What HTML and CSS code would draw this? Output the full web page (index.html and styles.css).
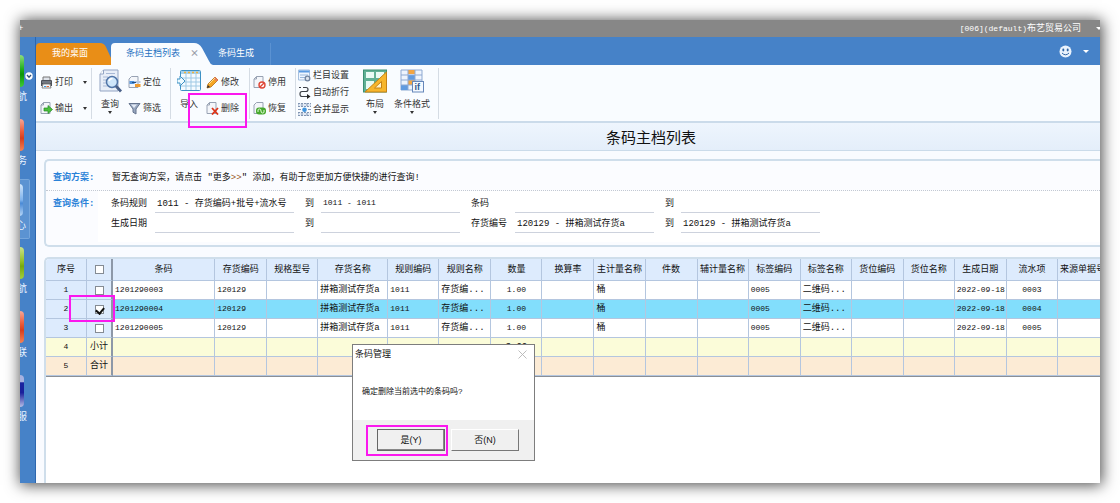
FILE: index.html
```html
<!DOCTYPE html>
<html lang="zh-CN">
<head>
  <meta charset="UTF-8" />
  <meta name="viewport" content="width=device-width, initial-scale=1.0" />
  <title>条码主档列表</title>
  <link rel="stylesheet" href="styles.css">
</head>
<body>
  <div class="window">
    <header class="titlebar">
      <span class="plus">+</span>
      <span class="company"><span class="num">[006](default)</span>布艺贸易公司</span>
      <i class="caret"></i>
    </header>

    <div class="shell">
      <nav class="sidebar">
        <a class="side-item green" href="#"><i></i><span>航</span></a>
        <a class="side-item red" href="#"><i></i><span>务</span></a>
        <a class="side-item blue active" href="#"><i></i><span>心</span></a>
        <a class="side-item lime" href="#"><i></i><span>航</span></a>
        <a class="side-item red" href="#"><i></i><span>联</span></a>
        <a class="side-item navy" href="#"><i></i><span>服</span></a>
        <button class="collapse" aria-label="收起">
          <svg width="8" height="8" viewBox="0 0 8 8"><circle cx="4" cy="4" r="3.7" fill="#fff"/><path d="M2 3l2 2.2L6 3" fill="none" stroke="#2b4f7d" stroke-width="1.3"/></svg>
        </button>
      </nav>

      <main class="main">
        <div class="tabs">
          <a class="tab home" href="#">我的桌面</a>
          <a class="tab current" href="#">条码主档列表 <b class="close">×</b></a>
          <a class="tab plain" href="#">条码生成</a>
          <div class="user">
            <svg width="13" height="13" viewBox="0 0 13 13"><circle cx="6.500" cy="6.500" r="6" fill="#e9f2fc"/><ellipse cx="4.300" cy="5" rx="1" ry="1.400" fill="#2f65a5"/><ellipse cx="8.700" cy="5" rx="1" ry="1.400" fill="#2f65a5"/><path d="M3 8q3.500 3.600 7 0" fill="none" stroke="#2f65a5"/></svg>
            <i class="caret"></i>
          </div>
        </div>

        <div class="toolbar">
          <div class="group print">
            <div class="stack">
              <button class="tool"><svg viewBox="0 0 13 13"><path d="M3 1h7v4H3z" fill="#dfe3ea" stroke="#777"/><path d="M1 5q0-1 1-1h9q1 0 1 1v5H1z" fill="#4c5058"/><path d="M2 6h9" stroke="#9aa0aa"/><path d="M3 8h7l1 4H2z" fill="#f5f8fc" stroke="#888"/><path d="M4 10.500h2" stroke="#3b9be0"/><path d="M6.500 10.500h2.500" stroke="#e06c3b"/></svg>打印<i class="caret"></i></button>
              <button class="tool"><svg viewBox="0 0 13 13"><path d="M3.500.500H10v11H1V3z" fill="#f4f6fa" stroke="#98a2b3"/><path d="M1 3h2.500V.500" fill="none" stroke="#98a2b3"/><path d="M4 6h4V3.500L12.500 7.500 8 11.500V9H4z" fill="#4cc13c" stroke="#238a25" stroke-width=".7"/></svg>输出<i class="caret"></i></button>
            </div>
          </div>
          <div class="group find">
            <button class="tool big"><svg viewBox="0 0 24 24"><path d="M5.500 1H20v21H2V5z" fill="#e8eef8" stroke="#93a4c3"/><path d="M2 5h3.500V1" fill="#fff" stroke="#93a4c3"/><path d="M8 4.500h9M5 8h5M5 11h3M5 14h3M5 17h4" stroke="#a9b9d6"/><circle cx="14" cy="13" r="5.500" fill="#cfe6fb" stroke="#5175a8" stroke-width="1.500"/><path d="M11 12q1-2.500 3.500-2.500" fill="none" stroke="#fff" stroke-width="1.500"/><path d="M18 17l5 5.500" stroke="#4a6088" stroke-width="2.800"/></svg>查询<i class="caret"></i></button>
            <div class="stack">
              <button class="tool"><svg viewBox="0 0 13 13"><path d="M3.500.500H10v11H1V3z" fill="#f4f6fa" stroke="#98a2b3"/><path d="M1.500 5h5v3h-5z" fill="#4f93dc"/><path d="M7 8h5.500v3H7z" fill="#f09a2c"/><path d="M7 5h5.500v2H7z" fill="#b8c9e2"/><path d="M4 6.500h4" stroke="#234e86"/></svg>定位</button>
              <button class="tool"><svg viewBox="0 0 13 13"><path d="M1 1.500h11L8 7v5l-3-1.800V7z" fill="#98a8c0" stroke="#66758f"/><path d="M3 2.500h6L6 6z" fill="#e3eaf5"/></svg>筛选</button>
            </div>
          </div>
          <div class="group edit">
            <button class="tool big"><svg viewBox="0 0 24 24"><rect x="3.500" y="1.500" width="20" height="20" rx="1" fill="#f5fbff" stroke="#3d91c4"/><path d="M4 2h19v3H4z" fill="#a8d2ec"/><path d="M7 3.500h14" stroke="#f0b33e" stroke-width="1.500" stroke-dasharray="2 2"/><path d="M4 9h19M4 13h19M4 17h19M9 5v16M14 5v16M19 5v16" stroke="#9fc9e4"/><path d="M0 10h3V7l5 5-5 5v-3H0z" fill="#eefaff" stroke="#3d91c4"/></svg>导入</button>
            <div class="stack">
              <button class="tool"><svg viewBox="0 0 13 13"><path d="M1 12l1-4L9 1l3 3-7 7z" fill="#f5a623" stroke="#b46d12" stroke-width=".8"/><path d="M9 1l3 3-1.500 1.500-3-3z" fill="#e67a61"/><path d="M3 8l6-6" stroke="#ffe08a"/><path d="M1 12l.8-3L4 11z" fill="#333"/></svg>修改</button>
              <button class="tool delete"><svg viewBox="0 0 13 13"><path d="M3.500.500H10v11H1V3z" fill="#f4f6fa" stroke="#98a2b3"/><path d="M1 3h2.500V.500" fill="none" stroke="#98a2b3"/><path d="M6 6l6 6.500M12 6l-6 6.500" stroke="#dd3419" stroke-width="1.800"/></svg>删除<span class="mark"></span></button>
            </div>
          </div>
          <div class="group status">
            <div class="stack">
              <button class="tool"><svg viewBox="0 0 13 13"><path d="M3.500.500H10v11H1V3z" fill="#f4f6fa" stroke="#98a2b3"/><path d="M1 3h2.500V.500" fill="none" stroke="#98a2b3"/><circle cx="9" cy="9" r="3" fill="#fff" stroke="#df4737" stroke-width="1.400"/><path d="M7 11l4-4" stroke="#df4737" stroke-width="1.400"/></svg>停用</button>
              <button class="tool"><svg viewBox="0 0 13 13"><path d="M3.500.500H10v11H1V3z" fill="#f4f6fa" stroke="#98a2b3"/><rect x="3" y="5.500" width="10" height="7" rx="3" fill="#47a82e"/><path d="M5 10V8q0-1 1.500-1T8 9t1.500 2 1.500-1V8" fill="none" stroke="#e5ffd9"/></svg>恢复</button>
            </div>
          </div>
          <div class="group view">
            <div class="stack three">
              <button class="tool"><svg viewBox="0 0 13 13"><path d="M.500 1h11v10H.500z" fill="#eff6ff" stroke="#a4bfdf"/><path d="M1 1.500h10.500v2H1z" fill="#5b9be2"/><path d="M2 6h8M2 8.500h5" stroke="#9bb8db"/><circle cx="9.500" cy="9.500" r="2.300" fill="#dde4ee" stroke="#71839e" stroke-width="1.300"/></svg>栏目设置</button>
              <button class="tool"><svg viewBox="0 0 13 13"><path d="M1 1.500h2M5 1.500h3q2 0 2 2t-2 2H4q-2 0-2 2.500t2 2.500h5" fill="none" stroke="#3b3f46" stroke-width="1.200"/><path d="M9 8l3.500 2.500L9 13z" fill="#222"/></svg>自动折行</button>
              <button class="tool"><svg viewBox="0 0 13 13"><path d="M0 .500h13v3H0zM0 9.500h13v3H0z" fill="#e1e9f4" stroke="#8296b3" stroke-dasharray="2 1"/><path d="M4 0v3M9 0v3M4 10v3M9 10v3" stroke="#8296b3"/><circle cx="6.500" cy="6.700" r="2.300" fill="#3f95df"/><path d="M0 6.500h3M10 6.500h3" stroke="#8296b3"/></svg>合并显示</button>
            </div>
            <button class="tool big layout"><svg viewBox="0 0 24 24"><rect x=".500" y="1" width="23" height="22" fill="#61b195" stroke="#3c8f73"/><path d="M3 3h8v6H3zM13 3h8v6h-8zM3 12h8v8H3z" fill="#e9fbf4"/><path d="M23.500 3v20H2z" fill="#f7b62c" stroke="#c58216"/><path d="M18.500 12.500v6.500h-7z" fill="#fff4cb" stroke="#c58216"/></svg>布局<i class="caret"></i></button>
            <button class="tool big"><svg viewBox="0 0 24 24"><path d="M1 1h21v20H1z" fill="#eef4fd" stroke="#8ea9d2"/><path d="M8 1h7v4H8zM8 11h7v5H8z" fill="#f3a542"/><path d="M8 6h7v5H8zM1 16h7v5H1z" fill="#619be0"/><path d="M1 6h21M1 11h21M1 16h21M8 1v20M15 1v20" stroke="#8ea9d2"/><rect x="12.500" y="12.500" width="11" height="10.500" fill="#f4f9ff" stroke="#6687ba"/><text x="14.500" y="21" class="icon-text">if</text></svg>条件格式<i class="caret"></i></button>
          </div>
        </div>

        <h1 class="page-title">条码主档列表</h1>

        <section class="filters">
          <div class="scheme">
            <strong>查询方案:</strong>
            <p>暂无查询方案，请点击 "更多<em>&gt;&gt;</em>" 添加，有助于您更加方便快捷的进行查询!</p>
          </div>
          <div class="conditions">
            <strong>查询条件:</strong>
            <form class="fields">
              <label for="rule1">条码规则</label><input id="rule1" type="text" value="1011 - 存货编码+批号+流水号">
              <label for="rule2">到</label><input id="rule2" class="num" type="text" value="1011 - 1011">
              <label for="code1">条码</label><input id="code1" type="text">
              <label for="code2">到</label><input id="code2" type="text">
              <label for="date1">生成日期</label><input id="date1" type="text">
              <label for="date2">到</label><input id="date2" type="text">
              <label for="inv1">存货编号</label><input id="inv1" type="text" value="120129 - 拼箱测试存货a">
              <label for="inv2">到</label><input id="inv2" type="text" value="120129 - 拼箱测试存货a">
            </form>
          </div>
        </section>

        <section class="grid">
          <table>
            <colgroup>
              <col class="c-no"><col class="c-check"><col class="c-code"><col><col class="c-odd"><col class="c-name"><col class="c-odd"><col><col class="c-odd"><col><col class="c-odd"><col><col class="c-odd"><col><col class="c-odd"><col><col class="c-odd"><col><col class="c-odd"><col class="c-source">
            </colgroup>
            <thead>
              <tr>
                <th>序号</th><th class="frozen"><input type="checkbox" aria-label="全选"></th><th>条码</th><th>存货编码</th><th>规格型号</th><th>存货名称</th><th>规则编码</th><th>规则名称</th><th>数量</th><th>换算率</th><th>主计量名称</th><th>件数</th><th>辅计量名称</th><th>标签编码</th><th>标签名称</th><th>货位编码</th><th>货位名称</th><th>生成日期</th><th>流水项</th><th class="source">来源单据号</th>
              </tr>
            </thead>
            <tbody>
              <tr>
                <th class="num">1</th><th class="frozen"><input type="checkbox" aria-label="选择第1行"></th><td class="num">1201290003</td><td class="num">120129</td><td></td><td>拼箱测试存货a</td><td class="num">1011</td><td>存货编...</td><td class="num mid">1.00</td><td></td><td>桶</td><td></td><td></td><td class="num">0005</td><td>二维码...</td><td></td><td></td><td class="num">2022-09-18</td><td class="num mid">0003</td><td></td>
              </tr>
              <tr class="selected">
                <th class="num">2</th><th class="frozen marked"><input type="checkbox" aria-label="选择第2行" checked><span class="mark"></span></th><td class="num">1201290004</td><td class="num">120129</td><td></td><td>拼箱测试存货a</td><td class="num">1011</td><td>存货编...</td><td class="num mid">1.00</td><td></td><td>桶</td><td></td><td></td><td class="num">0005</td><td>二维码...</td><td></td><td></td><td class="num">2022-09-18</td><td class="num mid">0004</td><td></td>
              </tr>
              <tr>
                <th class="num">3</th><th class="frozen"><input type="checkbox" aria-label="选择第3行"></th><td class="num">1201290005</td><td class="num">120129</td><td></td><td>拼箱测试存货a</td><td class="num">1011</td><td>存货编...</td><td class="num mid">1.00</td><td></td><td>桶</td><td></td><td></td><td class="num">0005</td><td>二维码...</td><td></td><td></td><td class="num">2022-09-18</td><td class="num mid">0005</td><td></td>
              </tr>
            </tbody>
            <tfoot>
              <tr class="subtotal">
                <th class="num">4</th><th class="frozen">小计</th><td></td><td></td><td></td><td></td><td></td><td></td><td class="mid">3.00</td><td></td><td></td><td></td><td></td><td></td><td></td><td></td><td></td><td></td><td></td><td></td>
              </tr>
              <tr class="total">
                <th class="num">5</th><th class="frozen">合计</th><td></td><td></td><td></td><td></td><td></td><td></td><td></td><td></td><td></td><td></td><td></td><td></td><td></td><td></td><td></td><td></td><td></td><td></td>
              </tr>
            </tfoot>
          </table>
        </section>
      </main>
    </div>

    <div class="dialog" role="dialog" aria-labelledby="dialog-title">
      <div class="dialog-head">
        <h2 id="dialog-title">条码管理</h2>
        <button class="dialog-close" aria-label="关闭"><svg width="9" height="9" viewBox="0 0 9 9"><path d="M.500.500l8 8M8.500.500l-8 8" stroke="#b5b5b5" stroke-width=".9"/></svg></button>
      </div>
      <p>确定删除当前选中的条码吗?</p>
      <div class="dialog-foot">
        <button class="btn default">是(Y)<span class="mark"></span></button>
        <button class="btn">否(N)</button>
      </div>
    </div>
  </div>
</body>
</html>
```

FILE: styles.css
```css
* {
  box-sizing: border-box;
}
body {
  margin: 0;
  padding: 20px;
  height: 100vh;
  background: #fff;
  color: #111;
  font: 9px/12px "Liberation Mono", "Noto Sans CJK SC", monospace;
}
button, input {
  font: inherit;
  color: inherit;
}
button {
  padding: 0;
  border: 0;
  background: none;
}
a {
  color: inherit;
  text-decoration: none;
}
.window {
  position: relative;
  display: flex;
  flex-direction: column;
  height: 100%;
  background: #4682c8;
  box-shadow: 1px 1px 14px 1px rgba(0, 0, 0, 0.7);
}
.caret {
  border: 3px solid transparent;
  border-top-color: currentColor;
  border-bottom: 0;
}
.mark {
  position: absolute;
  border: 2px solid #fb17ee;
  pointer-events: none;
}
.num {
  font-size: 8px;
}

/* title bar */
.titlebar {
  display: flex;
  align-items: center;
  height: 17px;
  background: #878787;
  color: #fff;
  overflow: hidden;
}
.plus {
  margin-left: -2px;
}
.company {
  margin-left: auto;
  margin-right: 15px;
}
.titlebar .caret {
  margin-right: -2px;
}
.shell {
  display: flex;
  flex: 1;
  min-height: 0;
}

/* left navigation, partly scrolled off */
.sidebar {
  position: relative;
  width: 16px;
  padding-top: 14px;
  border-right: 1px solid #2c66ae;
}
.side-item {
  display: flex;
  flex-direction: column;
  align-items: flex-end;
  gap: 5px;
  width: 10px;
  height: 60px;
  margin-bottom: 4px;
  padding: 4px 6px 0 0;
  overflow: hidden;
  color: #e8f2ff;
  font-size: 10px;
}
.side-item i {
  width: 16px;
  height: 32px;
  border-radius: 4px;
}
.side-item span {
  margin-right: -3px;
}
.side-item.active {
  background: #5b93d2;
  border: 1px solid #75a6dc;
  border-left: 0;
  border-radius: 0 2px 2px 0;
}
.green i {
  background: linear-gradient(#8fdd7c, #1fae1a 45%, #0a9409 60%, #3fcb33);
}
.red i {
  background: linear-gradient(#f7a796, #ea5a38 40%, #d63e1c 60%, #f58354);
}
.blue i {
  background: linear-gradient(#cfe5fb, #7fb3ec 50%, #4a8ad6 60%, #b5d6f7);
}
.lime i {
  background: linear-gradient(#cbe38b, #93bf26 45%, #76a80e 60%, #a3cf3e);
}
.navy i {
  background: linear-gradient(#a8b2e0 22%, #1a23a0 24%, #1a1f9b 55%, #b7bfe6);
}
.collapse {
  position: absolute;
  left: 5px;
  top: 35px;
  display: flex;
}
.main {
  display: flex;
  flex-direction: column;
  flex: 1;
  min-width: 0;
  background: #f9fbff;
}

/* tabs */
.tabs {
  display: flex;
  align-items: flex-end;
  height: 28px;
  background: #4682c8;
  font-family: "Noto Sans CJK SC", sans-serif;
  color: #fff;
}
.tab {
  height: 22px;
  line-height: 20px;
}
.tab.home {
  width: 75px;
  padding-left: 16px;
  background: #e98e17;
  clip-path: path("M0 22V4Q0 0 4 0H64Q68 0 70 4L75 15V22Z");
}
.tab.current {
  width: 102px;
  padding-left: 15px;
  background: #f9fcff;
  color: #1f70bf;
  clip-path: path("M0 22V4Q0 0 4 0H83Q88 0 91 5L98 18Q99 21 102 22Z");
}
.close {
  margin-left: 8px;
  color: #9a9fa8;
}
.tab.plain {
  padding: 0 16px 0 5px;
  border-right: 1px solid #5b92d2;
}
.user {
  display: flex;
  align-items: center;
  gap: 11px;
  height: 27px;
  margin-left: auto;
  padding-right: 11px;
}

/* toolbar */
.toolbar {
  display: flex;
  height: 58px;
  padding: 3px 0 2px;
  background: #f9fcff;
  border-bottom: 2px solid #cbdbea;
  color: #333;
  font-family: "Noto Sans CJK SC", sans-serif;
}
.group {
  display: flex;
  border-right: 1px solid #d5dce4;
}
.group.print {
  width: 56px;
  padding: 0 4px;
}
.group.find {
  gap: 6px;
  padding: 0 9px 0 6px;
}
.group.edit {
  gap: 5px;
  padding: 0 10px 0 6px;
}
.group.status {
  padding: 0 9px 0 3px;
}
.group.view {
  gap: 7px;
  padding: 0 8px 0 2px;
}
.stack {
  display: flex;
  flex: 1;
  flex-direction: column;
  gap: 12px;
  padding-top: 7px;
}
.stack.three {
  gap: 3px;
  padding-top: 0;
}
.tool {
  position: relative;
  display: flex;
  align-items: center;
  gap: 2px;
  height: 14px;
  white-space: nowrap;
}
.tool svg {
  width: 13px;
  height: 13px;
}
.tool > .caret {
  margin-left: auto;
  border-width: 3px 2px 0;
}
.tool.big {
  flex-direction: column;
  gap: 0;
  height: auto;
  padding-top: 1px;
}
.tool.big svg {
  width: 24px;
  height: 24px;
  margin-bottom: 5px;
}
.tool.big > .caret {
  margin: 1px auto 0;
}
.tool.layout {
  margin-left: 7px;
}
.icon-text {
  font: bold 9px "Liberation Sans", sans-serif;
  fill: #31588f;
}
.delete .mark {
  inset: -8px -8px -13px -18px;
}

.page-title {
  margin: 0;
  padding-left: 166px;
  height: 28px;
  border-bottom: 1px solid #cbdbea;
  background: linear-gradient(#eef5fd, #e4eefa);
  font: 15px/27px "Noto Sans CJK SC", sans-serif;
  text-align: center;
}

/* query panel */
.filters {
  margin: 8px 0 0 8px;
  height: 88px;
  border: 2px solid #cfdeeb;
  border-right: 0;
  border-radius: 5px 0 0 5px;
  background: #fbfcff;
}
.filters strong {
  width: 52px;
  padding-left: 7px;
  color: #2a82d8;
}
.scheme {
  display: flex;
  align-items: center;
  height: 30px;
  padding-top: 4px;
  border-bottom: 1px dotted #c3c9d2;
}
.scheme p {
  margin: 0 0 0 14px;
}
.scheme em {
  color: #9a5a28;
  font-style: normal;
}
.conditions {
  display: flex;
  height: 51px;
}
.conditions strong {
  padding-top: 7px;
}
.fields {
  display: grid;
  grid-template-columns: 44px 150px 16px 150px 44px 150px 16px 139px;
  grid-auto-rows: 20px;
  flex: 1;
  padding: 2px 0 0 13px;
  background: #fff;
}
.fields label {
  padding-top: 5px;
}
.fields input {
  width: 139px;
  height: 20px;
  padding: 0 2px;
  border: 0;
  border-bottom: 1px solid #cdd2dd;
  background: transparent;
}

/* data grid */
.grid {
  flex: 1;
  margin: 10px 0 0 8px;
  border: 2px solid #cfdeeb;
  border-right: 0;
  border-bottom: 0;
  border-radius: 5px 0 0 0;
  background: #fff;
  overflow: hidden;
}
table {
  table-layout: fixed;
  width: 1072px;
  border-collapse: separate;
  border-spacing: 0;
  border-bottom: 1px solid #8a8f96;
}
col {
  width: 52px;
}
.c-odd {
  width: 51px;
}
.c-no {
  width: 41px;
}
.c-check {
  width: 26px;
}
.c-code {
  width: 102px;
}
.c-name {
  width: 70px;
}
.c-source {
  width: 60px;
}
th, td {
  height: 19px;
  padding: 0 2px;
  border-right: 1px solid #b4c6df;
  border-bottom: 1px solid #b4c6df;
  font-weight: normal;
  text-align: left;
  white-space: nowrap;
}
th {
  padding: 0;
  background: #ddebfd;
  text-align: center;
}
thead th {
  height: 22px;
}
.source {
  padding-left: 2px;
  text-align: left;
}
.frozen {
  border-right: 2px solid #8d98a8;
}
.mid {
  text-align: center;
}
.selected td {
  background: #82defc;
}
.subtotal > * {
  background: #fbfcd9;
}
.total > * {
  background: #fcebd5;
}
th input {
  appearance: none;
  display: block;
  width: 9px;
  height: 9px;
  margin: 0 auto;
  border: 1px solid #858b93;
  background: #fff;
}
th input:checked::after {
  content: "";
  display: block;
  width: 4px;
  height: 6px;
  margin: 0 1px;
  border: solid #111;
  border-width: 0 2px 2px 0;
  transform: rotate(40deg);
}
.marked {
  position: relative;
}
.marked .mark {
  inset: -5px -4px -4px -18px;
}

/* confirm dialog */
.dialog {
  position: absolute;
  left: 332px;
  top: 324px;
  width: 183px;
  border: 1px solid #7d7d7d;
  background: #fff;
  font-family: "Liberation Sans", "Noto Sans CJK SC", sans-serif;
}
.dialog-head {
  display: flex;
  justify-content: space-between;
  align-items: center;
  height: 18px;
  padding: 0 7px 0 2px;
}
.dialog-close {
  display: flex;
}
.dialog h2 {
  margin: 0;
  font-size: 9px;
  font-weight: normal;
}
.dialog p {
  margin: 0;
  padding: 23px 9px 22px;
  font-size: 8px;
}
.dialog-foot {
  display: flex;
  gap: 6px;
  padding: 9px 0 9px 24px;
  background: #f0f0f0;
}
.btn {
  position: relative;
  width: 68px;
  height: 22px;
  background: #f0f0f0;
  border: 1px solid #fff;
  border-right-color: #777;
  border-bottom-color: #777;
}
.btn.default {
  border: 1px solid #666;
  box-shadow: inset -1px -1px #888;
}
.btn .mark {
  inset: -5px -4px -6px -12px;
}
```
